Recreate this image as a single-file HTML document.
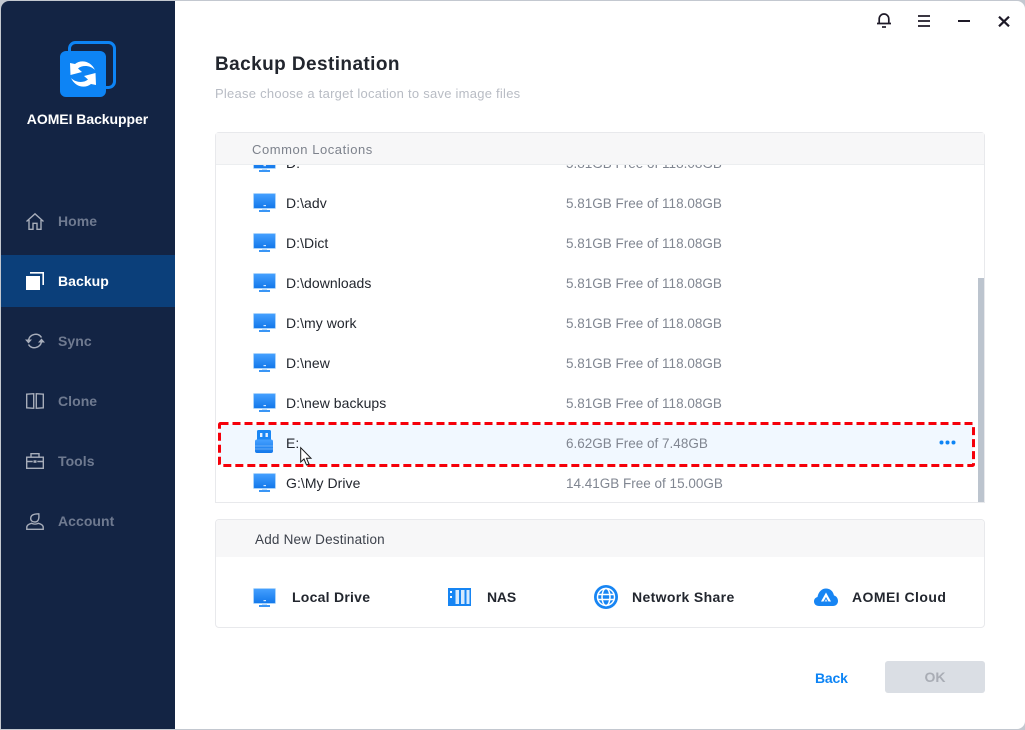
<!DOCTYPE html>
<html><head><meta charset="utf-8">
<style>
html,body{margin:0;padding:0;width:1025px;height:730px;overflow:hidden;background:#c3c8d0}
body{font-family:"Liberation Sans",sans-serif;position:relative}
.a{position:absolute;white-space:nowrap}
#win{position:absolute;left:1px;top:1px;width:1024px;height:728px;background:#fff;border-radius:8px 8px 8px 0;overflow:hidden}
#side{position:absolute;left:1px;top:1px;width:174px;height:728px;background:#132444;border-radius:8px 0 0 0}
.nav{position:absolute;left:58px;font-size:14px;font-weight:bold;color:#6f7a90;letter-spacing:.05px;line-height:16px}
.row{position:absolute;left:286px;font-size:14px;color:#22262e;line-height:16px;letter-spacing:.05px}
.sz{position:absolute;left:566px;font-size:13.5px;color:#808691;line-height:16px;margin-top:1px}
.dest{position:absolute;font-size:14px;font-weight:bold;color:#22262e;top:589px;line-height:16px;letter-spacing:.25px}
svg{position:absolute;overflow:visible}
</style></head><body>
<div id="win"></div>
<div id="side"></div>
<div class="a" style="left:1px;top:255px;width:174px;height:52px;background:#0b3f7a"></div>

<svg style="left:60px;top:41px" width="56" height="56" viewBox="0 0 56 56">
<rect x="9.5" y="1.5" width="45" height="45" rx="6" fill="none" stroke="#0d84f5" stroke-width="3"/>
<rect x="0" y="10" width="46" height="46" rx="6" fill="#0d84f5"/>
<path d="M35 29C31 20 21 18 15 23L10 22 10.500 34 22 31 18 27.500C22 24 30 24 35 29z" fill="#fff"/>
<path d="M35 29C31 20 21 18 15 23L10 22 10.500 34 22 31 18 27.500C22 24 30 24 35 29z" fill="#fff" transform="rotate(180 23 33)"/>
</svg>
<div class="a" style="left:0;width:175px;top:111px;text-align:center;color:#fff;font-size:14px;font-weight:bold;line-height:16px;letter-spacing:-.05px">AOMEI Backupper</div>

<svg style="left:26px;top:213px" width="18" height="17" viewBox="0 0 18 17" fill="none" stroke="#a7adba" stroke-width="1.400"><path d="M.5 8.500L9 .8l8.500 7.700M3 7V16.300h4v-6h4v6h4V7"/></svg>
<div class="nav" style="top:213px">Home</div>

<svg style="left:26px;top:272px" width="18" height="18" viewBox="0 0 18 18"><rect x="0" y="4" width="14" height="14" fill="#fff"/><path d="M4 .8H17.200V13" fill="none" stroke="#fff" stroke-width="1.600"/></svg>
<div class="nav" style="top:273px;color:#fff">Backup</div>

<svg style="left:25px;top:333px" width="20" height="16" viewBox="0 0 20 16" fill="none" stroke="#a7adba" stroke-width="1.500"><path d="M3.500 7C5 1 13-1 16.500 4.500M16.500 9C15 15 7 17 3.500 11.500"/><path d="M0 6.500h7L3.500 10.500zM13 9.500h7L16.500 5.500z" fill="#a7adba" stroke="none"/></svg>
<div class="nav" style="top:333px">Sync</div>

<svg style="left:26px;top:393px" width="18" height="16" viewBox="0 0 18 16" fill="none" stroke="#a7adba" stroke-width="1.400"><path d="M.7 1.200L7.700.7V15.300L.7 14.800zM17.300 1.200L10.300.7V15.300L17.300 14.800z"/></svg>
<div class="nav" style="top:393px">Clone</div>

<svg style="left:26px;top:453px" width="18" height="16" viewBox="0 0 18 16" fill="none" stroke="#a7adba" stroke-width="1.400"><rect x=".7" y="4.200" width="16.600" height="11.100"/><path d="M5 4V.7h8V4M.7 8.500h6M11.300 8.500h6"/><rect x="7.500" y="7.300" width="3" height="2.500" fill="#a7adba" stroke="none"/></svg>
<div class="nav" style="top:453px">Tools</div>

<svg style="left:26px;top:513px" width="18" height="17" viewBox="0 0 18 17" fill="none" stroke="#a7adba" stroke-width="1.400"><path d="M4.700 5.500C4.700 2.500 7 .8 12.800.8 13.300 5.500 12.500 9 9 9 6.500 9 4.700 7.800 4.700 5.500z"/><path d="M.8 16.300v-2C.8 12 3 11 5.500 10.300c2 1 5 1 7 0C15 11 17.200 12 17.200 14.300v2z"/></svg>
<div class="nav" style="top:513px">Account</div>

<svg style="left:877px;top:13px" width="14" height="15" viewBox="0 0 14 15" fill="none" stroke="#1e1a28" stroke-width="1.700"><path d="M0 10.500h14M2.200 10.500V6a4.800 5 0 0 1 9.600 0v4.500"/><path d="M5 14h4"/></svg>
<svg style="left:918px;top:15px" width="12" height="12" viewBox="0 0 12 12" stroke="#1e1a28" stroke-width="1.800"><path d="M0 1h12M0 6h12M0 11h12"/></svg>
<svg style="left:958px;top:20px" width="12" height="2" viewBox="0 0 12 2" stroke="#1e1a28" stroke-width="2"><path d="M0 1h12"/></svg>
<svg style="left:998px;top:16px" width="12" height="11" viewBox="0 0 12 11" stroke="#1e1a28" stroke-width="2.200"><path d="M1 .7l10 9.600M11 .7L1 10.300"/></svg>

<div class="a" style="left:215px;top:55px;font-size:19px;font-weight:bold;color:#22262e;line-height:20px;letter-spacing:.42px">Backup Destination</div>
<div class="a" style="left:215px;top:86px;font-size:13px;color:#b8bcc4;line-height:16px;letter-spacing:.25px">Please choose a target location to save image files</div>

<div class="a" style="left:215px;top:132px;width:768px;height:369px;border:1px solid #e8e9ec;border-radius:4px 4px 0 0"></div>
<div class="a" style="left:216px;top:133px;width:768px;height:31px;background:#f7f7f8;border-bottom:1px solid #eceef0"></div>
<div class="a" style="left:252px;top:142px;font-size:13px;color:#7d828c;line-height:16px;letter-spacing:.55px">Common Locations</div>

<svg width="0" height="0" style="left:0;top:0"><defs>
<linearGradient id="g" x1="0" y1="0" x2="0" y2="1"><stop offset="0" stop-color="#45a0ff"/><stop offset="1" stop-color="#1277ea"/></linearGradient>
<symbol id="pc" viewBox="0 0 23 19" overflow="visible"><rect x=".5" y=".5" width="22" height="15" rx="1" fill="url(#g)" stroke="#a9d3fb" stroke-width="1"/><rect x="10.500" y="12" width="2.500" height="1.200" fill="#d5e9ff"/><rect x="6" y="17" width="11" height="2" fill="#3a96f6"/><rect x="9" y="16" width="5" height="1" fill="#bcdcfb"/></symbol>
</defs></svg>

<div class="a" style="left:216px;top:165px;width:760px;height:8px;overflow:hidden">
<svg style="left:37px;top:-12px" width="23" height="19"><use href="#pc"/></svg>
<div class="a" style="left:70px;top:-10px;font-size:14px;color:#22262e;line-height:16px">D:</div>
<div class="a" style="left:350px;top:-9px;font-size:13.5px;color:#808691;line-height:16px">5.81GB Free of 118.08GB</div>
</div>

<svg style="left:253px;top:193px" width="23" height="19"><use href="#pc"/></svg><div class="row" style="top:195px">D:\adv</div><div class="sz" style="top:195px">5.81GB Free of 118.08GB</div>
<svg style="left:253px;top:233px" width="23" height="19"><use href="#pc"/></svg><div class="row" style="top:235px">D:\Dict</div><div class="sz" style="top:235px">5.81GB Free of 118.08GB</div>
<svg style="left:253px;top:273px" width="23" height="19"><use href="#pc"/></svg><div class="row" style="top:275px">D:\downloads</div><div class="sz" style="top:275px">5.81GB Free of 118.08GB</div>
<svg style="left:253px;top:313px" width="23" height="19"><use href="#pc"/></svg><div class="row" style="top:315px">D:\my work</div><div class="sz" style="top:315px">5.81GB Free of 118.08GB</div>
<svg style="left:253px;top:353px" width="23" height="19"><use href="#pc"/></svg><div class="row" style="top:355px">D:\new</div><div class="sz" style="top:355px">5.81GB Free of 118.08GB</div>
<svg style="left:253px;top:393px" width="23" height="19"><use href="#pc"/></svg><div class="row" style="top:395px">D:\new backups</div><div class="sz" style="top:395px">5.81GB Free of 118.08GB</div>

<div class="a" style="left:219px;top:424px;width:754px;height:40px;background:#f1f8ff"></div>
<svg style="left:255px;top:430px" width="18" height="23" viewBox="0 0 18 23"><rect x="2" y="0" width="14" height="11" rx="1.500" fill="#1a87f4"/><rect x="5" y="3" width="2.400" height="4" fill="#e6f2ff"/><rect x="10.500" y="3" width="2.400" height="4" fill="#e6f2ff"/><rect x="0" y="9.500" width="18" height="13.500" rx="2" fill="url(#g)"/><path d="M0 16h18M0 19h18" stroke="#7db9f8" stroke-width=".7"/></svg>
<div class="row" style="top:435px">E:</div><div class="sz" style="top:435px">6.62GB Free of 7.48GB</div>
<svg style="left:939px;top:440px" width="18" height="5" viewBox="0 0 18 5" fill="#0d84f5"><circle cx="2.500" cy="2.500" r="2"/><circle cx="8.500" cy="2.500" r="2"/><circle cx="14.500" cy="2.500" r="2"/></svg>

<svg style="left:218px;top:422px" width="757" height="45" viewBox="0 0 757 45" fill="none"><rect x="1.500" y="1.500" width="754" height="42" rx="1" stroke="#f5000a" stroke-width="3" stroke-dasharray="8 4"/></svg>

<svg style="left:300px;top:447px" width="14" height="20" viewBox="0 0 14 20"><path d="M.7.700V15l3.300-3 2.500 6 2.500-1-2.500-5.700h4.500z" fill="#fff" stroke="#1a1a1a" stroke-width="1"/></svg>

<svg style="left:253px;top:473px" width="23" height="19"><use href="#pc"/></svg><div class="row" style="top:475px">G:\My Drive</div><div class="sz" style="top:475px">14.41GB Free of 15.00GB</div>

<div class="a" style="left:978px;top:278px;width:6px;height:224px;background:#bcc4ce"></div>

<div class="a" style="left:215px;top:519px;width:768px;height:107px;border:1px solid #e8e9ec;border-radius:4px"></div>
<div class="a" style="left:216px;top:520px;width:768px;height:37px;background:#f7f7f8;border-radius:4px 4px 0 0"></div>
<div class="a" style="left:255px;top:532px;font-size:13.5px;color:#3d424c;line-height:16px;letter-spacing:.2px">Add New Destination</div>

<svg style="left:253px;top:588px" width="23" height="19"><use href="#pc"/></svg>
<div class="dest" style="left:292px">Local Drive</div>
<svg style="left:448px;top:588px" width="23" height="18" viewBox="0 0 23 18"><rect width="23" height="18" fill="#1785f3"/><rect x="7.500" y="2" width="3.500" height="14" fill="#d5e9fd"/><rect x="13" y="2" width="3.500" height="14" fill="#d5e9fd"/><rect x="18.500" y="2" width="3" height="14" fill="#d5e9fd"/><rect x="2" y="3" width="2" height="2" fill="#fff"/><rect x="2" y="8" width="2" height="2" fill="#fff"/></svg>
<div class="dest" style="left:487px;letter-spacing:-.2px">NAS</div>
<svg style="left:594px;top:585px" width="24" height="24" viewBox="0 0 24 24" fill="none"><circle cx="12" cy="12" r="12" fill="#1785f3"/><g stroke="#fff" stroke-width="1.500"><circle cx="12" cy="12" r="8.500"/><ellipse cx="12" cy="12" rx="4" ry="8.500"/><path d="M3.500 9.500h17M3.500 14.500h17"/></g></svg>
<div class="dest" style="left:632px;letter-spacing:.35px">Network Share</div>
<svg style="left:814px;top:588px" width="24" height="18" viewBox="0 0 24 18"><path d="M5 18C2 18 0 16 0 13.500c0-2.500 1.500-4 3.500-4.500C4.500 3.500 8 .5 12 .5c4 0 7 2.500 8 7 2.500.5 4 3 4 5.500 0 3-2.200 5-5 5z" fill="#1785f3"/><path d="M12 4.500l5 9h-2.500L12 9 9.500 13.500H7z" fill="#fff"/><path d="M10.500 13.500h3L12 11z" fill="#cfe6ff"/></svg>
<div class="dest" style="left:852px;letter-spacing:.45px">AOMEI Cloud</div>

<div class="a" style="left:815px;top:670px;font-size:14px;font-weight:bold;color:#0d84f5;line-height:16px;letter-spacing:-.2px">Back</div>
<div class="a" style="left:885px;top:661px;width:100px;height:32px;border-radius:3px;background:#dadee4;color:#a9adb5;font-size:14px;font-weight:bold;line-height:33px;text-align:center">OK</div>
</body></html>
